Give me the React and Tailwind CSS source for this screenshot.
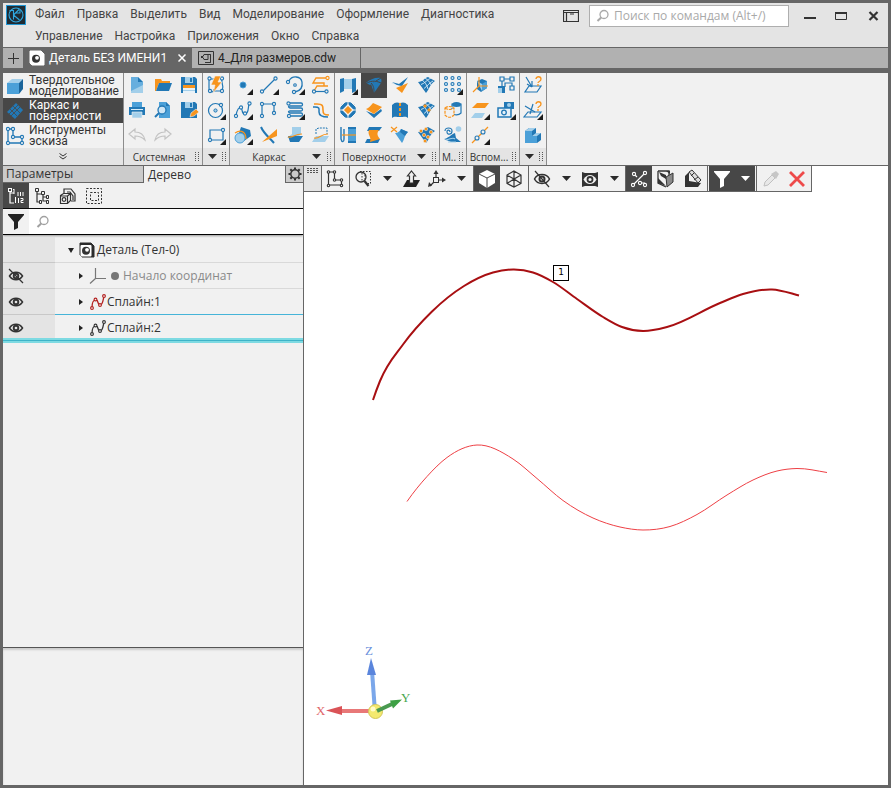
import React from "react";

const B = "#2278b5";
const M = "#4ba0d8";
const L = "#a3cfea";
const O = "#f7941d";
const K = "#333333";

/* ---------- helpers ---------- */

function Icon({ children, more }) {
  return (
    <svg className="size-5 shrink-0" viewBox="0 0 20 20" fill="none" aria-hidden="true">
      {children}
      {more && <path d="M20 14v6h-6z" fill="#1c1c1c" />}
    </svg>
  );
}

function Dot({ x, y, c = B, r = 1.6, f = "#f1f1f1" }) {
  return <circle cx={x} cy={y} r={r} fill={f} stroke={c} strokeWidth="1.1" />;
}

function Down({ className = "w-[22px]", color = "#2b2b2b", label = "Ещё" }) {
  return (
    <button type="button" aria-label={label} className={"flex h-full shrink-0 items-center justify-center " + className}>
      <svg width="9" height="5" viewBox="0 0 9 5" aria-hidden="true">
        <path d="M0 0h9L4.500 5z" fill={color} />
      </svg>
    </button>
  );
}

function Grip() {
  return (
    <svg className="shrink-0" width="6" height="9" viewBox="0 0 6 9" fill="#555" aria-hidden="true">
      {[0, 2, 4, 6, 8].map((y) => (
        <g key={y}>
          <rect x="1" y={y} width="1" height="1" />
          <rect x="4" y={y} width="1" height="1" />
        </g>
      ))}
    </svg>
  );
}

function Magnifier({ color }) {
  return (
    <svg className="size-3.5 shrink-0" viewBox="0 0 14 14" fill="none" stroke={color} aria-hidden="true">
      <circle cx="8" cy="5.500" r="4" strokeWidth="1.300" />
      <path d="M5.200 8.500L1.500 12" strokeWidth="2" />
    </svg>
  );
}

/* ---------- ribbon icons ---------- */

const saveBase = (
  <>
    <path d="M2 2h14l2 2v14H2z" fill={B} />
    <path d="M6 2h8v6H6z" fill={L} />
    <path d="M11 3h2v4h-2z" fill={B} />
  </>
);

const meshBase = (
  <>
    <path d="M2 7c5 0 6-4 10-5l7 4c-5 3-5 7-9 12z" fill={B} />
    <path d="M5 9.500c4-1 6-5 10-6.500M8 13.500c3-2 5-5.500 9-7.500M6 5c3 2 5 5 6 9M9 3c3 2 5 4 6 7" stroke="#d8ebf7" strokeWidth=".9" />
  </>
);

const ribbonIcons = {
  newFile: (
    <>
      <path d="M4 2h7l5 5v11H4z" fill={L} />
      <path d="M4 2h7v5h5v3L4 16z" fill={M} opacity=".7" />
      <path d="M11 2l5 5h-5z" fill={B} />
    </>
  ),
  open: (
    <>
      <path d="M2 4h6l1 2h8v2H6L3 16H2z" fill={O} />
      <path d="M6 8h13l-3 8H3z" fill={B} />
    </>
  ),
  save: (
    <>
      {saveBase}
      <path d="M4 10h12v8H4z" fill="#e8f2f8" />
      <path d="M4 10h12v3H4z" fill={O} />
      <path d="M4 15h12v1H4z" fill={L} />
    </>
  ),
  print: (
    <>
      <path d="M5 2h10v5H5z" fill={M} />
      <path d="M2 7h16v8H2z" fill={B} />
      <path d="M4 9h12v1H4z" fill="#d9ecf7" />
      <path d="M5 12h10v6H5z" fill={L} stroke="#f1f1f1" strokeWidth=".6" />
    </>
  ),
  preview: (
    <>
      <path d="M6 2h7l4 4v12H6z" fill={M} />
      <path d="M13 2l4 4h-4z" fill={B} />
      <circle cx="9" cy="10" r="4" fill="#cfe6f5" stroke={B} strokeWidth="1.300" />
      <path d="M6 13l-4 4" stroke={B} strokeWidth="2" />
    </>
  ),
  saveAs: (
    <>
      {saveBase}
      <path d="M11 17l1-4 5-4 3 3-5 4z" fill={O} stroke="#f1f1f1" strokeWidth=".6" />
    </>
  ),
  undo: <path d="M2 9l6-5v3c6 0 9 3 10 8-3-3-5-4-10-4v3z" stroke="#c3c3c3" strokeWidth="1.200" />,
  redo: <path d="M18 9l-6-5v3C6 7 3 10 2 15c3-3 5-4 10-4v3z" stroke="#c3c3c3" strokeWidth="1.200" />,
  lightning: (
    <>
      <path d="M3 4v9c0 5 5 5 5 1M3 4h5M16 3c-2 5 3 6 0 13H8" stroke={B} strokeWidth="1.200" />
      <Dot x={3.5} y={3.5} /><Dot x={16} y={3.5} /><Dot x={4} y={16} /><Dot x={16} y={16} />
      <path d="M9 1h6l-3 6h4L7 18l2-8H5z" fill={O} stroke="#f1f1f1" strokeWidth=".6" />
    </>
  ),
  circle: (
    <>
      <circle cx="9.500" cy="10.500" r="7" stroke={B} strokeWidth="1.200" />
      <circle cx="9.500" cy="10.500" r="1.600" fill={L} stroke={B} />
      <Dot x={15} y={5} />
    </>
  ),
  rect: (
    <>
      <path d="M4 5h13v10H4z" stroke={B} strokeWidth="1.200" />
      <Dot x={17} y={5} /><Dot x={4} y={15} />
    </>
  ),
  point: <circle cx="10" cy="10" r="3" fill={B} stroke={M} />,
  line: (
    <>
      <path d="M3 17L17 3" stroke={B} strokeWidth="1.200" />
      <Dot x={3} y={16.5} /><Dot x={16.5} y={3.5} />
    </>
  ),
  arc: (
    <>
      <path d="M4 6c3-6 12-5 13 1s-2 9-7 10" stroke={B} strokeWidth="1.300" />
      <Dot x={3} y={7} /><Dot x={9} y={17} /><Dot x={10} y={10} r={1.300} />
    </>
  ),
  offset: (
    <>
      <path d="M16 3H5L2 8h11v3M17 11H6l-3 5" stroke={O} strokeWidth="1.400" />
      <path d="M3 16.500h12" stroke={B} strokeWidth="1.200" />
      <Dot x={16.500} y={3} c={O} /><Dot x={3} y={16.500} /><Dot x={15.500} y={16.500} />
    </>
  ),
  spline: (
    <>
      <path d="M3 16c1-7 3-9 5-8s0 6 4 6 3-7 4-10" stroke={B} strokeWidth="1.200" />
      <Dot x={3} y={16} /><Dot x={8} y={7.500} /><Dot x={12} y={13.500} /><Dot x={16.500} y={3.500} />
    </>
  ),
  polyline: (
    <>
      <path d="M3 16V4h12v9" stroke={B} strokeWidth="1.200" />
      <Dot x={3} y={16} /><Dot x={3} y={4} /><Dot x={15} y={4} /><Dot x={15} y={13} />
    </>
  ),
  spiral: (
    <g stroke={B} strokeWidth="1.300">
      <path d="M4 3h12c2 0 2 3 0 3H5c-2 0-2 1.500 0 2h11c2 0 2 3 0 3H5c-2 0-2 1.500 0 2h11c2 0 2 3 0 3H6" />
      <Dot x={3.5} y={3.5} /><Dot x={4} y={16} />
    </g>
  ),
  waves: (
    <>
      <path d="M3 4h3c6 0 6 2 6 6s1 5 6 5" stroke={O} strokeWidth="1.600" />
      <path d="M2 7h2c5 0 4 2 4 5s2 5 9 5" stroke={B} strokeWidth="1.500" />
    </>
  ),
  cylinders: (
    <>
      <path d="M8 2l9 3 1 6-7 5-6-5z" fill={B} />
      <circle cx="7" cy="13" r="5" fill={L} stroke={M} />
      <path d="M2 8c6-4 11-1 11 6" stroke={O} strokeWidth="1.200" />
    </>
  ),
  crossing: (
    <>
      <path d="M2 2c3 7 8 10 13 16" stroke={B} strokeWidth="2" />
      <path d="M18 4v7L3 17z" fill={O} />
    </>
  ),
  section: (
    <>
      <path d="M7 2h9v7l-4 4H2l5-4z" fill={L} />
      <path d="M3 11h15l-4 6H5z" fill={B} />
      <path d="M3 12c5 1 6-3 14-3" stroke={O} strokeWidth="1.200" />
    </>
  ),
  contour: (
    <>
      <path d="M5 9V4l3-1h8v6" stroke={B} strokeDasharray="2 1" />
      <path d="M5 11h13l-4 6H1z" fill={L} />
      <path d="M3 13c6 1 6-4 14-4" stroke={O} strokeWidth="1.200" />
    </>
  ),
  extrude: (
    <>
      <path d="M6 4h8v10H6z" fill={L} />
      <path d="M2 4l4-1v13l-4 2zM14 4l4-1v13l-4 2z" fill={B} />
    </>
  ),
  loftDark: (
    <>
      <path d="M2 8c4-4 10-6 15-5 1 3 0 5 0 5l-5-2-6 4z" fill={B} />
      <path d="M7 9l5-3 5 2-7 10z" fill={B} />
      <path d="M2 9c3-3 9-4 15-1M7 8c3 3 3 6 3 10M12 6l5-3" stroke="#474747" />
    </>
  ),
  patch: (
    <>
      <circle cx="10" cy="10" r="8" fill={B} />
      <path d="M2 7l5-5M13 2l5 5M18 13l-5 5M7 18l-5-5M10 2v4M10 14v4M2 10h4M14 10h4" stroke="#f1f1f1" />
      <path d="M10 5l5 5-5 5-5-5z" fill={O} stroke="#f1f1f1" strokeWidth="1.300" />
    </>
  ),
  sheet: (
    <>
      <path d="M2 11l8 7 8-7-1-2-7 5z" fill={B} />
      <path d="M2 9c3-1 5-4 7-6l9 4c-2 2-5 4-8 7z" fill={O} />
    </>
  ),
  weave: (
    <>
      <path d="M10 3h8v14h-8z" fill={M} />
      <path d="M3 2v12c1 4 3 3 3 0V4" stroke={B} strokeWidth="1.400" />
      <path d="M10 3h8M10 17h8" stroke={B} strokeWidth="2" />
      <path d="M4 10h14" stroke={O} strokeWidth="1.200" />
    </>
  ),
  twist: (
    <>
      <path d="M5 2h13l-3 4H3zM3 14h13l-2 4H1z" fill={B} />
      <path d="M5 5h10c-3 4-1 6 1 9l-10 3c2-5-3-7-1-12z" fill={O} />
    </>
  ),
  trim: (
    <>
      <path d="M1 8l8 1 9-6-7 8z" fill={L} />
      <path d="M2 7l7 2 9-7-6 9-5-1z" fill={B} />
      <path d="M6 13l12-5-6 10z" fill={O} />
    </>
  ),
  mesh: meshBase,
  seam: (
    <>
      <path d="M2 5c3-3 5-3 8-2v14c-4 0-6-1-8 1zM18 5c-3-3-5-3-8-2v14c4 0 6-1 8 1z" fill={B} />
      <path d="M10 3v14" stroke={O} strokeWidth="2" strokeDasharray="3 2" />
    </>
  ),
  meshPts: (
    <>
      {meshBase}
      <path d="M9 4l2 2-2 2-2-2zM13 8l2 2-2 2-2-2z" fill={O} />
    </>
  ),
  removeFace: (
    <>
      <path d="M5 8c3 0 5-2 6-4l7 3c-4 3-3 7-6 11z" fill={M} />
      <path d="M11 4l7 3c-1 1-2 2-3 4l-5-4z" fill={B} />
      <path d="M1 2l6 5M7 2L1 7" stroke={O} strokeWidth="1.200" />
    </>
  ),
  meshDots: (
    <>
      <path d="M2 7c5 0 6-4 10-5l7 4c-5 3-5 7-9 12z" fill={B} />
      <g fill={O} stroke="#f1f1f1" strokeWidth=".5">
        <circle cx="5" cy="6" r="1.700" /><circle cx="10" cy="4" r="1.700" /><circle cx="15" cy="7" r="1.700" />
        <circle cx="8" cy="10" r="1.700" /><circle cx="12" cy="12" r="1.700" /><circle cx="9" cy="16" r="1.700" />
      </g>
    </>
  ),
  array: (
    <g stroke={B} strokeWidth="1.100">
      {[3, 9.5, 16].map((x) =>
        [3, 9, 15].map((y) => <circle key={x + "-" + y} cx={x} cy={y} r="1.500" fill="#d3e8f5" />)
      )}
    </g>
  ),
  copyBody: (
    <>
      <path d="M9 4v9c2 3 7 2 9 0V4z" fill="#e7f1f8" stroke={B} strokeWidth="1.200" />
      <ellipse cx="13.500" cy="4.500" rx="4.500" ry="2.500" fill={B} />
      <path d="M2 8c3-2 6-2 9 0v7c-3 3-6 3-9 0zM2 8c3 2 6 2 9 0" fill="#f1f1f1" stroke={O} strokeWidth="1.200" strokeDasharray="3 1" />
    </>
  ),
  scale: (
    <>
      <path d="M2 6c0-4 7-4 7 0s-5 4-5 1 3-2 3 0" stroke={B} strokeWidth="1.200" />
      <circle cx="15.500" cy="4" r="2.800" fill={L} />
      <path d="M1 14c3 0 8-5 11-6l1 5 5 4H8z" fill={B} />
      <path d="M3 15c5-1 7-3 9-1M5 17h8" stroke={L} strokeWidth="1.100" />
    </>
  ),
  planeBlock: (
    <>
      <path d="M7 6l5-2 5 2v7l-6 4-4-3z" fill={B} />
      <path d="M7 6l5 3v7z" fill={L} /><path d="M12 9l5-3v7l-5 3z" fill={M} />
      <path d="M3 17l6-6V2M9 11h9" stroke={O} strokeWidth="1.200" />
    </>
  ),
  tree: (
    <>
      <path d="M2 11h7v7H2z" fill={B} /><path d="M2 13h4v5H2z" fill={L} />
      <path d="M6 11V4h9M9 12V8h7v4" stroke={B} strokeWidth="1.200" />
      <path d="M4 2h4v4H4zM14 2h4v4h-4zM14 11h4v4h-4z" fill="#f1f1f1" stroke={B} strokeWidth="1.200" />
    </>
  ),
  planes: (
    <>
      <path d="M7 3h12l-4 5H2z" fill={O} />
      <path d="M5 13h10l-3 5H1z" fill={L} />
    </>
  ),
  camera: (
    <>
      <path d="M8 2h10v7H8z" fill={B} /><circle cx="13" cy="5" r="2" fill={L} />
      <path d="M2 8h13v9H2z" fill="#e7f1f8" stroke={B} strokeWidth="1.500" />
      <circle cx="8" cy="12.500" r="2.300" stroke={B} strokeWidth="1.300" />
    </>
  ),
  axisPts: (
    <>
      <path d="M2 18L18 2" stroke={O} strokeWidth="1.300" />
      <Dot x={7} y={13} r={2} /><Dot x={13} y={7} r={2} />
    </>
  ),
  ask1: (
    <>
      <path d="M6 11h12l-4 6H2z" stroke={B} strokeWidth="1.200" />
      <path d="M3 2l6 10M9 12V6M9 12L4 9" stroke={B} strokeWidth="1.200" />
      <path d="M13 4c0-3 5-3 5 0s-3 2-3 4M15 9v2" stroke={O} strokeWidth="1.300" />
    </>
  ),
  ask2: (
    <>
      <path d="M5 12h13l-4 5H1z" stroke={B} strokeWidth="1.200" />
      <path d="M2 6l10 6M10 4L7 14" stroke={B} strokeWidth="1.200" />
      <path d="M13 4c0-3 5-3 5 0s-3 2-3 4M15 9v2" stroke={O} strokeWidth="1.300" />
    </>
  ),
  solid: (
    <>
      <path d="M2 6l4-3h7v5h5v7l-4 3H2z" fill={B} />
      <path d="M2 6l4-3h7l-4 3zM9 11l4-3h5l-4 3z" fill={L} />
      <path d="M2 6h7v5h5v7H2z" fill={M} />
    </>
  ),
};

const ribbonGroups = [
  { label: "Системная", cols: "grid-cols-[repeat(3,26px)]", items: ["newFile", "open", "save", "print", "preview", "saveAs", "undo", "redo", ""] },
  { label: "", down: true, cols: "grid-cols-[26px]", items: ["lightning", "circle+", "rect+"] },
  {
    label: "Каркас", down: true, cols: "grid-cols-[repeat(4,26px)]",
    items: ["point+", "line+", "arc+", "offset", "spline+", "polyline", "spiral+", "waves", "cylinders+", "crossing", "section", "contour"],
  },
  {
    label: "Поверхности", down: true, cols: "grid-cols-[repeat(4,26px)]", active: "loftDark",
    items: ["extrude+", "loftDark", "trim", "mesh", "patch", "sheet", "seam", "meshPts", "weave", "twist", "removeFace", "meshDots"],
  },
  { label: "М..", cols: "grid-cols-[26px]", items: ["array+", "copyBody", "scale"] },
  { label: "Вспом...", cols: "grid-cols-[repeat(2,26px)]", items: ["planeBlock", "tree", "planes+", "camera+", "axisPts+", ""] },
  { label: "", down: true, cols: "grid-cols-[26px]", items: ["ask1", "ask2+", "solid"] },
];

function RibbonGroup({ group }) {
  return (
    <section className="flex shrink-0 flex-col border-r border-[#8c8c8c]">
      <div className={"grid auto-rows-[25px] " + group.cols}>
        {group.items.map((item, i) => {
          if (!item) return <span key={i} />;
          const name = item.replace("+", "");
          return (
            <button
              key={i}
              type="button"
              aria-label={name}
              className={"flex items-start justify-center pt-0.5 " + (group.active === name ? "bg-[#474747]" : "")}
            >
              <Icon more={item.endsWith("+")}>{ribbonIcons[name]}</Icon>
            </button>
          );
        })}
      </div>
      <div className="flex h-[17px] items-center bg-[#e4e4e4] pr-0.5">
        {group.label && (
          <span className="min-w-0 flex-1 whitespace-nowrap text-center text-[10px] leading-4">{group.label}</span>
        )}
        {group.down && <Down className={group.label ? "mr-0.5 w-4" : "flex-1"} label="Развернуть группу" />}
        <Grip />
      </div>
    </section>
  );
}

/* ---------- header ---------- */

function MenuRow({ items }) {
  return (
    <nav className="flex gap-3 pl-8 leading-[22px] [font-family:Roboto,'Open_Sans',sans-serif]">
      {items.map((m) => (
        <button key={m} type="button">{m}</button>
      ))}
    </nav>
  );
}

function Header() {
  return (
    <header className="flex h-11 justify-between bg-[#e4e4e4]">
      <div className="flex">
        <svg className="-mr-[23px] ml-[3px] mt-0.5 size-5" viewBox="0 0 20 20" fill="none" aria-hidden="true">
          <rect x=".5" y=".5" width="19" height="19" fill="#1f2b33" stroke="#2196d3" />
          <circle cx="10" cy="10" r="7" stroke="#2fa8e0" strokeWidth="1.100" />
          <path d="M3.500 5.500h4v9M7.500 10L13 4.500M7.500 10l6 5M10 8h4V5" stroke="#2fa8e0" strokeWidth="1.100" />
        </svg>
        <div>
          <MenuRow items={["Файл", "Правка", "Выделить", "Вид", "Моделирование", "Оформление", "Диагностика"]} />
          <MenuRow items={["Управление", "Настройка", "Приложения", "Окно", "Справка"]} />
        </div>
      </div>
      <div className="flex h-6 items-center pt-0.5">
        <button type="button" aria-label="Режим окна">
          <svg width="16" height="12" viewBox="0 0 16 12" fill="none" stroke={K} aria-hidden="true">
            <path d="M.5.5h15v11H.5zM.5 2.500h15M3.500 2.500v9M7 4h4" strokeWidth="1.200" />
          </svg>
        </button>
        <label className="ml-2.5 flex h-[22px] w-[200px] items-center gap-1 border border-[#aeaeae] bg-white pl-1.5">
          <Magnifier color="#a9a9a9" />
          <input aria-label="Поиск по командам" placeholder="Поиск по командам (Alt+/)" className="min-w-0 flex-1 bg-transparent outline-none placeholder:text-[#a9a9a9]" />
        </label>
        <button type="button" aria-label="Свернуть" className="ml-3 flex w-[18px] justify-center">
          <svg width="12" height="12" viewBox="0 0 12 12" aria-hidden="true"><path d="M0 7h12v2H0z" fill={K} /></svg>
        </button>
        <button type="button" aria-label="Развернуть" className="ml-3 flex w-5 justify-center">
          <svg width="12" height="12" viewBox="0 0 12 12" fill="none" aria-hidden="true"><path d="M.5 3h11v6.500H.5z" stroke={K} /><path d="M0 2h12v2H0z" fill={K} /></svg>
        </button>
        <button type="button" aria-label="Закрыть" className="ml-3 mr-[5px] flex w-5 justify-center">
          <svg width="11" height="10" viewBox="0 0 11 10" fill="none" aria-hidden="true"><path d="M1.500 1l8 8M9.500 1l-8 8" stroke={K} strokeWidth="2.200" /></svg>
        </button>
      </div>
    </header>
  );
}

function PartIcon({ body }) {
  return (
    <svg className="size-4 shrink-0" viewBox="0 0 16 16" fill="none" aria-hidden="true">
      <path d="M1 1h11l3 3v11H3l-2-2z" fill={body} stroke={body} strokeLinejoin="round" />
      <rect x="1.500" y="3" width="11" height="11.500" rx="1" fill="#fff" />
      <circle cx="7" cy="8.800" r="4" fill={K} />
      <circle cx="8" cy="7.800" r="1.900" fill="#fff" />
    </svg>
  );
}

function DocumentTabs() {
  return (
    <div className="flex h-[26px] border-b-5 border-t border-[#666] bg-[#b1b1b1] [font-family:Roboto,'Open_Sans',sans-serif]">
      <button type="button" aria-label="Новый документ" className="flex w-5 items-center justify-center">
        <svg width="11" height="11" viewBox="0 0 11 11" stroke={K} aria-hidden="true"><path d="M5.500 0v11M0 5.500h11" /></svg>
      </button>
      <div className="flex w-[169px] items-center gap-1 border-l border-[#666] bg-[#666] pl-[5px] pr-1.5 text-white">
        <PartIcon body="#ffffff" />
        <span className="flex-1 whitespace-nowrap">Деталь БЕЗ ИМЕНИ1</span>
        <button type="button" aria-label="Закрыть вкладку">
          <svg width="8" height="8" viewBox="0 0 8 8" stroke="#fff" strokeWidth="1.500" aria-hidden="true"><path d="M.5.5l7 7M7.500.5l-7 7" /></svg>
        </button>
      </div>
      <button type="button" className="flex w-[169px] items-center gap-1 border-r border-[#666] pl-1.5 text-[#222]">
        <svg className="size-4 shrink-0" viewBox="0 0 16 16" fill="none" stroke={K} aria-hidden="true">
          <path d="M.5 1.500h15v13H.5z" /><path d="M3 6.500h2l1-2h4v5H6l-1-2H3M10 4.500h2.500v8H7M12.500 4.500v8" />
        </svg>
        <span className="whitespace-nowrap">4_Для размеров.cdw</span>
      </button>
    </div>
  );
}

/* ---------- ribbon ---------- */

const modes = [
  {
    lines: ["Твердотельное", "моделирование"],
    icon: (
      <>
        <path d="M2 7l5-4h11l-4 4z" fill={L} /><path d="M14 7l4-4v10l-4 5z" fill="#1a659b" /><path d="M2 7h12v11H2z" fill={M} />
      </>
    ),
  },
  {
    lines: ["Каркас и", "поверхности"],
    active: true,
    icon: (
      <>
        <path d="M2 11l9-9 7 7-8 9z" fill={B} />
        <path d="M5 8l7 7M8 5l7 7M6 15l9-9M4 13l9-9" stroke="#474747" strokeWidth=".8" />
      </>
    ),
  },
  {
    lines: ["Инструменты", "эскиза"],
    icon: (
      <>
        <path d="M3 3h5v8h9v6H3z" stroke={B} strokeWidth="1.300" />
        <Dot x={3} y={3} /><Dot x={8} y={3} /><Dot x={8} y={11} /><Dot x={17} y={11} /><Dot x={3} y={17} /><Dot x={17} y={17} />
      </>
    ),
  },
];

function Ribbon() {
  return (
    <div className="flex h-[93px] overflow-hidden border-b border-[#666] bg-[#f1f1f1] text-[#333]">
      <div className="flex w-[121px] shrink-0 flex-col border-r border-[#8c8c8c]">
        {modes.map((m) => (
          <button
            key={m.lines[0]}
            type="button"
            className={"flex h-[25px] items-center gap-1 pl-0.5 text-left text-[12px] leading-[11px] [font-family:Roboto,'Open_Sans',sans-serif] " + (m.active ? "bg-[#474747] text-white" : "")}
          >
            <Icon>{m.icon}</Icon>
            <span className="whitespace-nowrap">{m.lines[0]}<br />{m.lines[1]}</span>
          </button>
        ))}
        <button type="button" aria-label="Показать все" className="flex h-[17px] items-center justify-center bg-[#e4e4e4]">
          <svg width="8" height="7" viewBox="0 0 8 7" fill="none" stroke={K} aria-hidden="true"><path d="M.5.5L4 3 7.500.5M.5 3.500L4 6l3.500-2.500" /></svg>
        </button>
      </div>
      {ribbonGroups.map((g, i) => <RibbonGroup key={i} group={g} />)}
    </div>
  );
}

/* ---------- tree panel ---------- */

function Eye({ off }) {
  return (
    <svg className="size-4" viewBox="0 0 16 16" fill="none" stroke={K} aria-hidden="true">
      <path d="M1.500 8c3-5 10-5 13 0-3 5-10 5-13 0z" strokeWidth="1.500" />
      <circle cx="8" cy="8" r="2.300" strokeWidth="1.900" />
      {off && <path d="M1 1l14 14" strokeWidth="1.300" />}
    </svg>
  );
}

function SplineMark({ color }) {
  return (
    <svg className="size-[18px] shrink-0" viewBox="0 0 18 18" fill="none" stroke={color} aria-hidden="true">
      <path d="M3 15c0-6 1-8 4-8s1 5 4 5 3-5 4-9" strokeWidth="1.300" />
      <Dot x={3} y={15} c={color} r={1.400} /><Dot x={6.500} y={6.500} c={color} r={1.400} /><Dot x={11} y={12} c={color} r={1.400} /><Dot x={15} y={3} c={color} r={1.400} />
    </svg>
  );
}

function Expander({ open }) {
  return (
    <button type="button" aria-label={open ? "Свернуть узел" : "Развернуть узел"}>
      <svg width="6" height="6" viewBox="0 0 6 6" fill="#222" aria-hidden="true">
        {open ? <path d="M0 1h6L3 6z" /> : <path d="M1 0l4 3-4 3z" />}
      </svg>
    </button>
  );
}

function TreeRow({ eye, line = "border-[#d9d9d9]", last, className, children }) {
  return (
    <li className="flex h-[26px]">
      <div className={"flex w-[52px] items-center border-[#c8c8c8] bg-[#e4e4e4] pl-[5px] " + (last ? "" : "border-b")}>
        {eye && <button type="button" aria-label="Видимость"><Eye off={eye === "off"} /></button>}
      </div>
      <div className={"flex flex-1 items-center " + (last ? "" : "border-b " + line + " ") + className}>{children}</div>
    </li>
  );
}

function TreePanel() {
  return (
    <aside className="flex w-[301px] shrink-0 flex-col border-r border-[#666] bg-[#f1f1f1] text-[#333]">
      <div className="flex h-[17px]">
        <button type="button" className="w-[141px] border-b border-r border-[#666] bg-[#cbcbcb] pl-[3px] text-left leading-4">Параметры</button>
        <button type="button" className="flex-1 pl-1 text-left leading-4">Дерево</button>
        <button type="button" aria-label="Настройка панели" className="flex w-[18px] items-center justify-center border-b border-l border-[#666] bg-[#cbcbcb]">
          <svg width="14" height="14" viewBox="0 0 14 14" fill="none" stroke={K} aria-hidden="true">
            <circle cx="7" cy="7" r="4.200" strokeWidth="1.400" />
            <path d="M7 .5v2M7 11.500v2M.5 7h2M11.500 7h2M2.300 2.300l1.500 1.500M10.200 10.200l1.500 1.500M11.700 2.300l-1.500 1.500M3.800 10.200l-1.500 1.500" strokeWidth="2" />
          </svg>
        </button>
      </div>
      <div className="flex h-[26px] border-b border-black">
        <button type="button" aria-label="Структура" className="flex w-[26px] items-center justify-center bg-[#474747]">
          <svg className="size-[18px]" viewBox="0 0 18 18" fill="none" stroke="#fff" aria-hidden="true">
            <path d="M3 4v12h4M3 6h4" strokeWidth="1.200" /><rect x="1.500" y="1.500" width="3" height="3" />
            <path d="M6 3l1-1v5M8.500 10v6M11 5v4M13.500 5v4M16 5v4M11.500 11v5M13.500 11.500h2.500v2h-2v2h2.500" />
          </svg>
        </button>
        <button type="button" aria-label="Дерево построения" className="flex w-[26px] items-center justify-center">
          <svg className="size-[18px]" viewBox="0 0 18 18" fill="none" stroke={K} aria-hidden="true">
            <path d="M4 4v11h3M4 7h6M10 6v8h4M10 10h4" strokeWidth="1.200" />
            <path d="M2.500 1.500h3v3h-3zM8.500 4.500h3v3h-3zM13.500 8.500h2v3h-2zM13.500 13.500h2v3h-2zM6.500 13.500h2v3h-2z" fill="#f1f1f1" />
          </svg>
        </button>
        <button type="button" aria-label="Компоненты" className="flex w-[26px] items-center justify-center">
          <svg className="size-[18px]" viewBox="0 0 18 18" fill="none" stroke={K} strokeWidth="1.200" aria-hidden="true">
            <path d="M5 6V2h7l4 5v7h-4" /><path d="M8 5h3l3 4v4" /><path d="M1.500 8.500l3-2h7v7l-3 3h-7zM1.500 9h7v7M8.500 9l3-2.500" />
            <circle cx="5" cy="12.500" r="1.800" />
          </svg>
        </button>
        <button type="button" aria-label="Выделение" className="flex w-[26px] items-center justify-center">
          <svg className="size-[18px]" viewBox="0 0 18 18" fill="none" stroke={K} aria-hidden="true">
            <rect x="1.500" y="1.500" width="15" height="15" strokeDasharray="2 1.500" /><rect x="5.500" y="5.500" width="8" height="8" strokeDasharray="2 1.500" />
          </svg>
        </button>
      </div>
      <label className="flex h-[26px] items-center border-b border-black bg-white shadow-[0_1px_2px_#999]">
        <span className="flex h-full w-[26px] shrink-0 items-center justify-center bg-[#f1f1f1]">
          <svg width="16" height="16" viewBox="0 0 16 16" fill="#222" aria-hidden="true"><path d="M0 0h16v1l-6 7v6l-4 2V8L0 1z" /></svg>
        </span>
        <span className="flex pl-[7px]"><Magnifier color="#a0a0a0" /></span>
        <input aria-label="Поиск в дереве" className="ml-1 min-w-0 flex-1 bg-transparent outline-none" />
      </label>
      <ul className="pt-0.5">
        <TreeRow className="pl-[13px]">
          <Expander open />
          <span className="flex items-center gap-0.5 pl-[5px]"><PartIcon body="#2b2b2b" />Деталь (Тел-0)</span>
        </TreeRow>
        <TreeRow eye="off" className="pl-[23px] text-[#8a8a8a]">
          <Expander />
          <svg className="ml-[5px] size-[18px] shrink-0" viewBox="0 0 18 18" fill="none" stroke="#777" aria-hidden="true"><path d="M6.500 1v10.500H17M6.500 11.500L1 16.500" strokeWidth="1.200" /></svg>
          <span className="mx-1 size-2 rounded-full bg-[#777]" />
          Начало координат
        </TreeRow>
        <TreeRow eye="on" line="border-[#46b4d8]" className="pl-[23px]">
          <Expander />
          <span className="flex items-center pl-[5px]"><SplineMark color="#b3201f" />Сплайн:1</span>
        </TreeRow>
        <TreeRow eye="on" last className="pl-[23px]">
          <Expander />
          <span className="flex items-center pl-[5px]"><SplineMark color={K} />Сплайн:2</span>
        </TreeRow>
      </ul>
      <div className="relative -mt-[3px] h-[5px] border-y-2 border-[#7edae2] bg-[#3db4c8]" />
      <div className="flex-1" />
      <div className="h-[138px] border-t border-[#555] shadow-[inset_0_2px_2px_#ccc]" />
    </aside>
  );
}

/* ---------- viewport ---------- */

// Smooth path through points ordered by x (non-uniform cubic Hermite).
function smoothPath(pts) {
  const slope = (a, b) => (b[1] - a[1]) / (b[0] - a[0]);
  const m = pts.map((p, i) => {
    const a = pts[i - 1];
    const b = pts[i + 1];
    if (!a) return slope(p, b) * 1.15;
    if (!b) return slope(a, p) * 1.15;
    const h0 = p[0] - a[0];
    const h1 = b[0] - p[0];
    return (slope(a, p) * h1 + slope(p, b) * h0) / (h0 + h1);
  });
  let d = `M${pts[0][0]} ${pts[0][1]}`;
  for (let i = 0; i < pts.length - 1; i++) {
    const [x0, y0] = pts[i];
    const [x1, y1] = pts[i + 1];
    const h = (x1 - x0) / 3;
    d += `C${x0 + h} ${y0 + m[i] * h} ${x1 - h} ${y1 - m[i + 1] * h} ${x1} ${y1}`;
  }
  return d;
}

const spline1 = [
  [69, 208], [76, 189], [99, 152.5], [128, 119.5], [160, 94], [189, 80.5], [210, 77.5], [229, 80.5], [249, 90], [273, 107],
  [299, 125], [318, 135], [339, 139], [363, 135], [416, 111], [439, 102], [468, 97.5], [495, 103.5],
];
const spline2 = [
  [103, 309.5], [123, 284.5], [143, 265.5], [173, 253], [209, 267], [233, 286.5], [259, 308.5], [289, 326],
  [316, 335], [339, 338], [366, 334.5], [393, 322.5], [423, 303], [449, 288], [473, 279], [493, 276.5], [523, 280.5],
];

function Tool({ label, dark, children }) {
  return (
    <button type="button" aria-label={label} className={"flex h-full w-[26px] shrink-0 items-center justify-center " + (dark ? "bg-[#474747]" : "")}>
      <Icon>{children}</Icon>
    </button>
  );
}

function ToolGroup({ children, className = "" }) {
  return <div className={"flex h-full shrink-0 border-r border-[#666] " + className}>{children}</div>;
}

function ViewToolbar() {
  return (
    <div className="flex h-[26px] w-fit border-b border-[#666] bg-[#f1f1f1]">
      <div className="flex w-[18px] justify-center border-r border-[#666] bg-[#e4e4e4] pt-0.5">
        <svg width="12" height="6" viewBox="0 0 12 6" fill="#555" aria-hidden="true">
          {[0, 3, 6, 9].map((x) => (
            <g key={x}><rect x={x} y="0" width="2" height="1" /><rect x={x} y="2" width="2" height="1" /><rect x={x} y="4" width="2" height="1" /></g>
          ))}
        </svg>
      </div>
      <ToolGroup className="pr-px">
        <Tool label="Эскиз">
          <path d="M3.500 3v13h13v-5H9.500V3z" stroke={K} strokeWidth="1.200" />
          {[[3.5, 3], [9.5, 3], [9.5, 11], [16.5, 11], [3.5, 16.5], [16.5, 16.5]].map(([x, y]) => <Dot key={x + "," + y} x={x} y={y} c={K} r={1.2} />)}
        </Tool>
      </ToolGroup>
      <ToolGroup className="pr-px">
        <Tool label="Масштаб">
          <path d="M7 2.500h10.500v12H14" stroke={K} strokeDasharray="1.500 1.500" /><circle cx="8" cy="8" r="5" stroke={K} strokeWidth="1.300" />
          <path d="M9 4v8M12 6v5" stroke={K} strokeDasharray="1.500 1.500" /><path d="M11.500 12l4 5" stroke={K} strokeWidth="2.200" />
        </Tool>
        <Down />
        <Tool label="Нормально к плоскости">
          <path d="M6 11h13l-4 7H2z" fill="#222" /><path d="M10.500 2l4 5h-2v7h-4V7h-2z" fill="#f1f1f1" stroke={K} strokeWidth="1.200" />
        </Tool>
        <Tool label="Ориентация">
          <path d="M9 8V3M11 11h6M7 13l-4 4" stroke={K} strokeWidth="1.200" /><path d="M9 1l2.500 4h-5zM19 11l-4-2.500v5zM1 18l1-5 3 3.500z" fill={K} />
          <rect x="6.500" y="8.500" width="5" height="5" stroke={K} fill="#f1f1f1" />
        </Tool>
        <Down />
      </ToolGroup>
      <ToolGroup className="gap-px pr-px">
        <Tool label="Полутоновое" dark>
          <path d="M10 1l8 4v9l-8 5-8-5V5z" fill="#fff" /><path d="M2 5l8 4 8-4M10 9v10" stroke="#474747" />
        </Tool>
        <Tool label="Каркас">
          <path d="M10 2l7 4v8.500L10 18l-7-3.500V6zM3 6l7 4 7-4M10 10v8M10 2v8M3 14.500L10 10l7 4.500" stroke={K} strokeWidth="1.200" />
        </Tool>
      </ToolGroup>
      <ToolGroup>
        <Tool label="Скрыть объекты">
          <path d="M2.500 10c3-6 12-6 15 0-3 6-12 6-15 0z" stroke={K} strokeWidth="1.500" /><circle cx="10" cy="10" r="2.500" stroke={K} strokeWidth="2" /><path d="M3 2l14 16" stroke={K} strokeWidth="1.200" />
        </Tool>
        <Down />
        <Tool label="Скрыть фоном">
          <path d="M2 3l3 1h10l3-1v15l-3-1H5l-3 1z" fill={K} /><path d="M3.500 10.500c3-6 10-6 13 0-3 6-10 6-13 0z" fill="#f1f1f1" />
          <circle cx="10" cy="10.500" r="2.500" stroke={K} strokeWidth="1.800" />
        </Tool>
        <Down />
      </ToolGroup>
      <ToolGroup className="gap-px pr-px">
        <Tool label="Привязки" dark>
          <path d="M4 16L16 4M5 5l3 3M12 14h4" stroke="#fff" strokeWidth="1.200" />
          <Dot x={4} y={16} c="#fff" f="#474747" /><Dot x={16} y={4} c="#fff" f="#474747" /><Dot x={5} y={5} c="#fff" f="#474747" /><Dot x={16} y={16} c="#fff" f="#474747" /><Dot x={11} y={14} c="#fff" f="#474747" />
        </Tool>
        <Tool label="Сечение">
          <path d="M2 2h11v4M2 2v12l8 4" stroke={K} strokeWidth="1.300" /><path d="M3 3l7 3v4l-5-3zM2 9l8 8-8-3zM10 2h4v3z" fill={K} /><path d="M10 8l7-4v9l-6 5z" fill="#8a8a8a" stroke={K} />
        </Tool>
        <Tool label="Размеры">
          <path d="M2 7l4-4v9l12 2-3 4H2z" fill={K} /><path d="M6 3l3-2 9 10-3 3zM8 7l3-3M11 11l4-3" stroke={K} fill="#ddd" />
        </Tool>
      </ToolGroup>
      <ToolGroup className="px-px">
        <Tool label="Фильтр" dark><path d="M2 2h16v1l-6 7v7l-4 2v-9L2 3z" fill="#fff" /></Tool>
        <Down className="w-5 bg-[#474747]" color="#fff" />
      </ToolGroup>
      <ToolGroup className="px-px">
        <Tool label="Пипетка">
          <path d="M3 17l1-4 7-7 3 3-7 7z" fill="#e8e8e8" stroke="#c0c0c0" /><path d="M10 5l5 5 3-5-3-3z" fill="#c6c6c6" />
        </Tool>
        <Tool label="Прервать"><path d="M3 3l14 14M17 3L3 17" stroke="#ee4a4a" strokeWidth="2.800" /></Tool>
      </ToolGroup>
    </div>
  );
}

function Viewport() {
  return (
    <main className="relative flex min-w-0 flex-1 flex-col overflow-hidden bg-white">
      <ViewToolbar />
      <svg className="min-h-0 flex-1 overflow-visible" width="584" height="400" fill="none" aria-label="Сплайны">
        <path d={smoothPath(spline1)} stroke="#a80f12" strokeWidth="2" />
        <path d={smoothPath(spline2)} stroke="#ee4045" strokeWidth="1" />
      </svg>
      <span className="absolute left-[249px] top-[99px] flex size-4 items-center justify-center border border-black bg-white text-[9px] text-black [font-family:'DejaVu_Sans',sans-serif]">1</span>
      <svg className="absolute bottom-[53px] left-2.5 overflow-visible" width="100" height="86" viewBox="0 0 100 86" fill="none" aria-label="Оси координат">
        <path d="M61 66L58 25" stroke="#7ba7ea" strokeWidth="4" />
        <path d="M57 12l5 17h-9z" fill="#5a85dc" />
        <path d="M60 65H24" stroke="#e87878" strokeWidth="4" />
        <path d="M12 64.500l16-4.500v9z" fill="#da5357" />
        <circle cx="61.500" cy="65.500" r="7" fill="#f4e96f" stroke="#d3c659" />
        <circle cx="59" cy="63" r="2.500" fill="#fffbc9" />
        <path d="M63 65l15-7" stroke="#4a9a50" strokeWidth="4" />
        <path d="M88 53.500l-12 1 3 8z" fill="#3da044" />
        <g className="text-[13px] [font-family:'Liberation_Serif',serif]">
          <text x="51" y="9" fill="#6a8fdc">Z</text>
          <text x="2" y="69" fill="#e0686b">X</text>
          <text x="87" y="56" fill="#4aa850">Y</text>
        </g>
      </svg>
    </main>
  );
}

export default function App() {
  return (
    <div className="flex min-h-screen flex-col border-[3px] border-[#666] bg-white text-[12px] text-[#444] [font-family:'Open_Sans','Noto_Sans',sans-serif]">
      <Header />
      <DocumentTabs />
      <Ribbon />
      <div className="flex flex-1">
        <TreePanel />
        <Viewport />
      </div>
    </div>
  );
}
